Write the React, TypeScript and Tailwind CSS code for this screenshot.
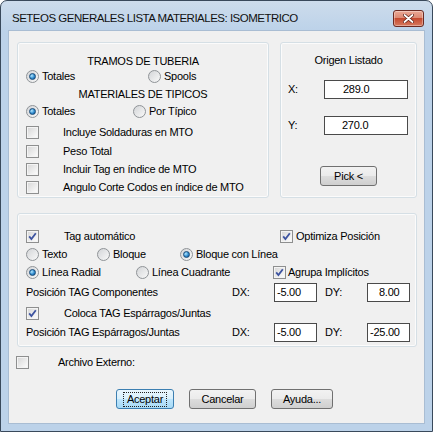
import type { ReactNode } from 'react';

function Radio({ on }: { on?: boolean }) {
  return (
    <span className="flex h-[13px] w-[13px] shrink-0 items-center justify-center rounded-full border border-[#8f9397] bg-[linear-gradient(135deg,#d3d5d8,#f9f9f9)]">
      {on && (
        <span className="h-[7px] w-[7px] rounded-full border border-[#174a78] bg-[radial-gradient(circle_at_35%_35%,#b4e8ff,#2f8bcf_55%,#0f4f86)]" />
      )}
    </span>
  );
}

function Check({ on }: { on?: boolean }) {
  return (
    <span className="flex h-[13px] w-[13px] shrink-0 items-center justify-center border border-[#8e8f8f] bg-[#f4f4f4]">
      <span className="flex h-[9px] w-[9px] items-center justify-center bg-[linear-gradient(135deg,#d9d9d9,#fbfbfb)]">
        {on && (
          <svg width="9" height="9" viewBox="0 0 9 9">
            <path d="M1.2 4.4 L3.4 7 L7.8 1.2" fill="none" stroke="#3e54a0" strokeWidth="1.8" />
          </svg>
        )}
      </span>
    </span>
  );
}

function Opt({ on, w, children }: { on?: boolean; w?: string; children: ReactNode }) {
  return (
    <div className={`flex items-center gap-[3px] ${w ?? ''}`}>
      <Radio on={on} />
      <span>{children}</span>
    </div>
  );
}

function Field({ value, w, pl }: { value: string; w: string; pl: string }) {
  return (
    <div className={`flex h-[19px] ${w} items-center border border-[#4a4a4a] bg-white ${pl}`}>
      {value}
    </div>
  );
}

function Btn({ children, w, focus }: { children: ReactNode; w: string; focus?: boolean }) {
  if (focus) {
    return (
      <div className={`flex h-[20px] ${w} items-center justify-center rounded-[3px] border border-[#3c7fb1] bg-[linear-gradient(#eaf6fd_0%,#d9f0fc_49%,#bee6fd_50%,#a7d9f5_100%)]`}>
        <span className="border border-dotted border-[#222] px-[3px] leading-[13px]">{children}</span>
      </div>
    );
  }
  return (
    <div className={`flex h-[20px] ${w} items-center justify-center rounded-[3px] border border-[#707070] bg-[linear-gradient(#f2f2f2_0%,#ebebeb_49%,#dddddd_50%,#cfcfcf_100%)]`}>
      {children}
    </div>
  );
}

const group = 'rounded-[3px] border border-[#d5dfe5] shadow-[inset_0_0_0_1px_#fbfbfb]';

export default function App() {
  return (
    <div className="flex h-[432px] w-[433px] flex-col overflow-hidden rounded-t-[7px] border border-[#39495b] bg-[linear-gradient(#cddcec,#bcd2e9_30px,#bcd2e9)] px-[7px] pb-[7px] font-['Liberation_Sans',Arial,sans-serif] text-[11px] tracking-[-0.25px] text-black">
      <div className="-mx-[7px] flex h-[29px] shrink-0 items-start justify-between pl-[11px] pr-[8px]">
        <span className="mt-[10px] text-[11.5px] leading-[14px] tracking-[-0.5px] text-[#111]">
          SETEOS GENERALES LISTA MATERIALES: ISOMETRICO
        </span>
        <div className="mt-[9px] flex h-[17px] w-[31px] items-center justify-center rounded-[3px] border border-[#6b2a22] bg-[linear-gradient(#eba896_0%,#dc8a74_45%,#c54a30_50%,#d77a5f_100%)] shadow-[inset_0_0_0_1px_rgba(255,255,255,0.35)]">
          <svg width="11" height="9" viewBox="0 0 11 9">
            <path d="M1.5 1 L9.5 8 M9.5 1 L1.5 8" stroke="#5a1e14" strokeWidth="3.2" strokeLinecap="round" />
            <path d="M1.5 1 L9.5 8 M9.5 1 L1.5 8" stroke="#ffffff" strokeWidth="1.8" strokeLinecap="round" />
          </svg>
        </div>
      </div>

      <div className="flex flex-1 flex-col bg-[#f0f0f0] shadow-[inset_0_0_0_1px_#a9bdd3]">
        {/* top row */}
        <div className="ml-[9px] mr-[8px] mt-[12px] flex h-[156px] gap-[11px]">
          <div className={`flex w-[252px] flex-col pl-[8px] pt-[11px] ${group}`}>
            <div className="flex h-[14px] items-center justify-center pr-[8px] leading-[14px]">TRAMOS DE TUBERIA</div>
            <div className="mt-[1px] flex h-[14px] items-center">
              <Opt on w="w-[122px]">Totales</Opt>
              <Opt>Spools</Opt>
            </div>
            <div className="mt-[4px] flex h-[14px] items-center justify-center pr-[8px]">MATERIALES DE TIPICOS</div>
            <div className="mt-[3px] flex h-[14px] items-center">
              <Opt on w="w-[107px]">Totales</Opt>
              <Opt>Por Típico</Opt>
            </div>
            {[
              'Incluye Soldaduras en MTO',
              'Peso Total',
              'Incluir Tag en índice de MTO',
              'Angulo Corte Codos en índice de MTO',
            ].map((t, i) => (
              <div key={t} className={`flex h-[14px] items-center gap-[24px] ${i === 0 ? 'mt-[7px]' : i === 1 ? 'mt-[5px]' : 'mt-[4px]'}`}>
                <Check />
                <span>{t}</span>
              </div>
            ))}
          </div>

          <div className={`flex flex-1 flex-col pl-[7px] pt-[10px] ${group}`}>
            <div className="flex h-[14px] items-center justify-center pr-[7px]">Origen Listado</div>
            <div className="mt-[13px] flex items-center">
              <span className="w-[36px]">X:</span>
              <Field value="289.0" w="w-[84px]" pl="pl-[18px]" />
            </div>
            <div className="mt-[17px] flex items-center">
              <span className="w-[36px]">Y:</span>
              <Field value="270.0" w="w-[84px]" pl="pl-[17px]" />
            </div>
            <div className="ml-[32px] mt-[31px]">
              <Btn w="w-[57px]">Pick &lt;</Btn>
            </div>
          </div>
        </div>

        {/* bottom group */}
        <div className={`ml-[9px] mr-[8px] mt-[15px] flex h-[134px] flex-col pl-[8px] pt-[15px] ${group}`}>
          <div className="flex h-[14px] items-center">
            <div className="flex w-[254px] items-center gap-[25px]">
              <Check on />
              <span>Tag automático</span>
            </div>
            <div className="flex items-center gap-[3px]">
              <Check on />
              <span>Optimiza Posición</span>
            </div>
          </div>
          <div className="mt-[4px] flex h-[14px] items-center">
            <Opt w="w-[71px]">Texto</Opt>
            <Opt w="w-[83px]">Bloque</Opt>
            <Opt on>Bloque con Línea</Opt>
          </div>
          <div className="mt-[4px] flex h-[14px] items-center">
            <Opt on w="w-[110px]">Línea Radial</Opt>
            <Opt w="w-[137px]">Línea Cuadrante</Opt>
            <div className="flex items-center gap-[2px]">
              <Check on />
              <span>Agrupa Implícitos</span>
            </div>
          </div>
          <div className="mt-[4px] flex h-[19px] items-center">
            <span className="w-[206px]">Posición TAG Componentes</span>
            <span className="w-[42px]">DX:</span>
            <Field value="-5.00" w="w-[43px]" pl="pl-[2px]" />
            <span className="ml-[8px] w-[42px]">DY:</span>
            <Field value="8.00" w="w-[43px]" pl="pl-[11px]" />
          </div>
          <div className="mt-[4px] flex h-[14px] items-center gap-[25px]">
            <Check on />
            <span>Coloca TAG Espárragos/Juntas</span>
          </div>
          <div className="mt-[3px] flex h-[19px] items-center">
            <span className="w-[206px]">Posición TAG Espárragos/Juntas</span>
            <span className="w-[42px]">DX:</span>
            <Field value="-5.00" w="w-[43px]" pl="pl-[2px]" />
            <span className="ml-[8px] w-[42px]">DY:</span>
            <Field value="-25.00" w="w-[43px]" pl="pl-[2px]" />
          </div>
        </div>

        <div className="ml-[8px] mt-[9px] flex h-[13px] items-center gap-[29px]">
          <Check />
          <span>Archivo Externo:</span>
        </div>

        <div className="ml-[108px] mt-[20px] flex gap-[15px]">
          <Btn w="w-[58px]" focus>Aceptar</Btn>
          <Btn w="w-[67px]">Cancelar</Btn>
          <Btn w="w-[62px]">Ayuda...</Btn>
        </div>
      </div>
    </div>
  );
}
